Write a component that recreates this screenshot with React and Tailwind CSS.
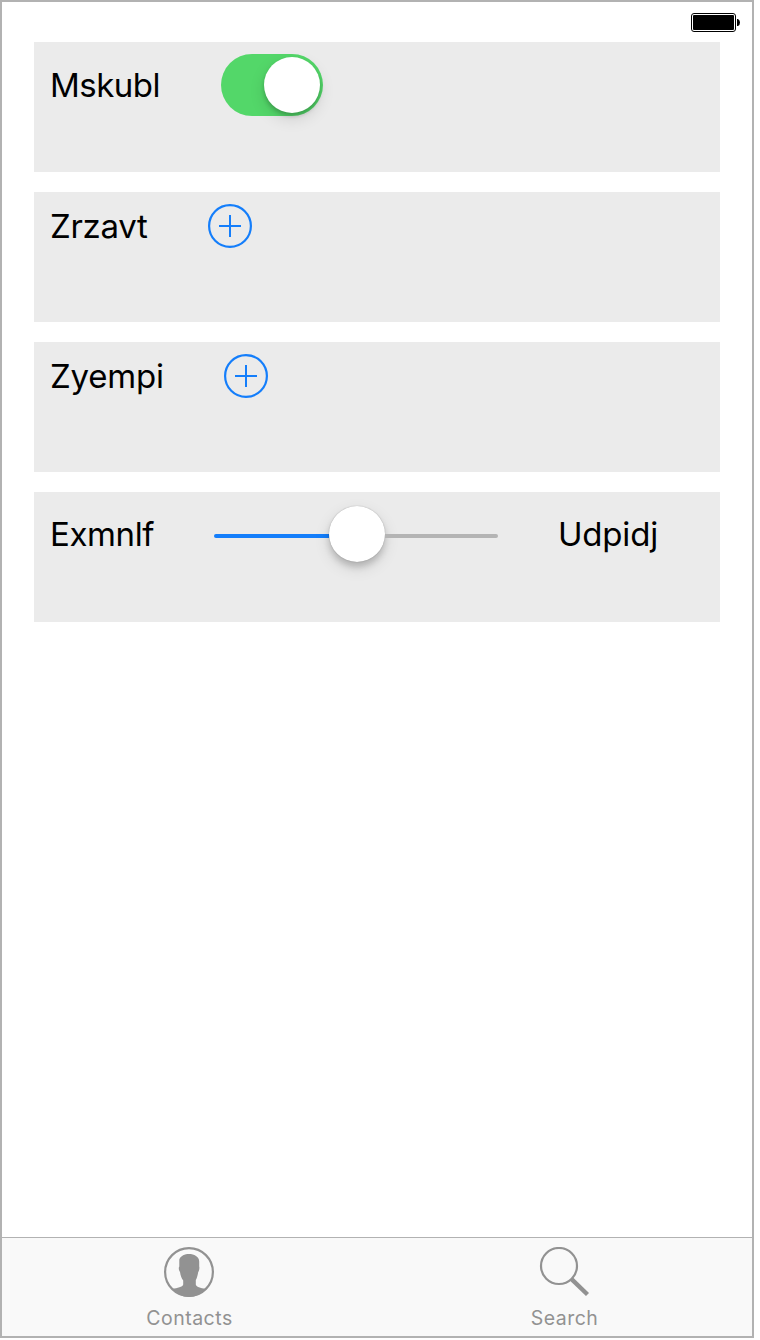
import React from "react";

const font = "font-['Inter','Liberation_Sans',sans-serif]";

function Panel({ children }) {
  return (
    <section className="flex h-[130px] items-start bg-[#ebebeb] pl-4">
      {children}
    </section>
  );
}

function Label({ className, children }) {
  return (
    <span className={`shrink-0 whitespace-nowrap text-[33px] leading-10 text-black ${className}`}>
      {children}
    </span>
  );
}

function AddButton() {
  return (
    <button aria-label="Add" className="mt-3 h-11 w-11 shrink-0">
      <svg viewBox="0 0 44 44" className="block h-11 w-11" fill="none" stroke="#147efb" strokeWidth="2">
        <circle cx="22" cy="22" r="20.900" strokeWidth="2.200" />
        <path d="M11 22H33M22 11V33" />
      </svg>
    </button>
  );
}

function Battery() {
  return (
    <svg viewBox="0 0 49 19" className="h-[19px] w-[49px]">
      <rect x="0.5" y="0.5" width="44" height="18" rx="2.5" fill="none" stroke="#000" />
      <rect x="2" y="2" width="41" height="15" rx="1" />
      <path d="M46 6H47Q49 7 49 9.500Q49 12 47 13H46Z" />
    </svg>
  );
}

function ContactIcon() {
  return (
    <svg viewBox="0 0 50 50" className="mr-0.5 h-[50px] w-[50px]">
      <circle cx="25" cy="25" r="23.900" fill="none" stroke="#929292" strokeWidth="2.200" />
      <path
        fill="#929292"
        d="M15.300 12.500C16.500 8.800 21 7 25 7C30 7 35.200 9.500 35.200 14.500V19.500C35.700 20.500 35.200 24 34.200 25C33.600 28.500 33 31 31.800 33V37.500C32 40 36.500 40.800 41.800 42C37 47 31.500 50 25 50C18.500 50 13 47 8.200 42C13.500 40.800 18.500 40.300 19.200 37.500V33.500C17.500 31.500 16.500 28.500 16 25C14.700 23.500 14.400 20.500 15.300 19.500Z"
      />
    </svg>
  );
}

function SearchIcon() {
  return (
    <svg viewBox="0 0 50 50" className="mr-0.5 h-[50px] w-[50px]" fill="none" stroke="#929292">
      <circle cx="20" cy="19" r="18" strokeWidth="2.200" />
      <path d="M32.300 31.800L48.500 47.500" strokeWidth="4.400" />
    </svg>
  );
}

function Tab({ icon, label }) {
  return (
    <button className="flex flex-1 flex-col items-center pt-[9px] text-[#929292]">
      {icon}
      <span className="mt-[9px] text-[19.5px] leading-6 tracking-[0.5px]">{label}</span>
    </button>
  );
}

export default function App() {
  return (
    <div className={`min-h-[1340px] w-[760px] bg-white ${font}`}>
      <div className="flex h-[1338px] w-[754px] flex-col border-2 border-[#b2b2b2] bg-white">
        <header className="flex h-10 shrink-0 justify-end pr-3 pt-[11px]">
          <Battery />
        </header>
        <main className="flex flex-1 flex-col gap-5 px-8">
          <Panel>
            <Label className="mt-[23px] w-[171px] tracking-[-0.5px]">Mskubl</Label>
            <button
              role="switch"
              aria-checked="true"
              aria-label="Mskubl"
              className="mt-3 flex h-[62px] w-[102px] shrink-0 items-center justify-end rounded-full bg-[#53d769] pr-[3px]"
            >
              <span className="h-14 w-14 rounded-full bg-white shadow-[0_6px_16px_rgba(0,0,0,0.12),0_3px_4px_rgba(0,0,0,0.2)]" />
            </button>
          </Panel>
          <Panel>
            <Label className="mt-[14px] w-[158px] tracking-[-0.3px]">Zrzavt</Label>
            <AddButton />
          </Panel>
          <Panel>
            <Label className="mt-[14px] w-[174px] tracking-[-0.2px]">Zyempi</Label>
            <AddButton />
          </Panel>
          <Panel>
            <Label className="mt-[22px] w-[164px] tracking-[-0.4px]">Exmnlf</Label>
            <div className="mt-[14px] flex h-[60px] w-[284px] shrink-0 items-center" role="slider" aria-label="Exmnlf" aria-valuenow={50}>
              <span className="h-1 w-[115px] rounded-l-full bg-[#147efb]" />
              <span className="-mt-1 h-14 w-14 rounded-full bg-white shadow-[0_0_1px_rgba(0,0,0,0.35),0_6px_16px_rgba(0,0,0,0.12),0_5px_6px_rgba(0,0,0,0.16)]" />
              <span className="h-1 flex-1 rounded-r-full bg-[#b4b4b4]" />
            </div>
            <Label className="ml-[60px] mt-[22px] tracking-[-0.2px]">Udpidj</Label>
          </Panel>
        </main>
        <nav className="flex h-[99px] shrink-0 border-t border-[#b2b2b2] bg-[#f9f9f9]">
          <Tab icon={<ContactIcon />} label="Contacts" />
          <Tab icon={<SearchIcon />} label="Search" />
        </nav>
      </div>
    </div>
  );
}
